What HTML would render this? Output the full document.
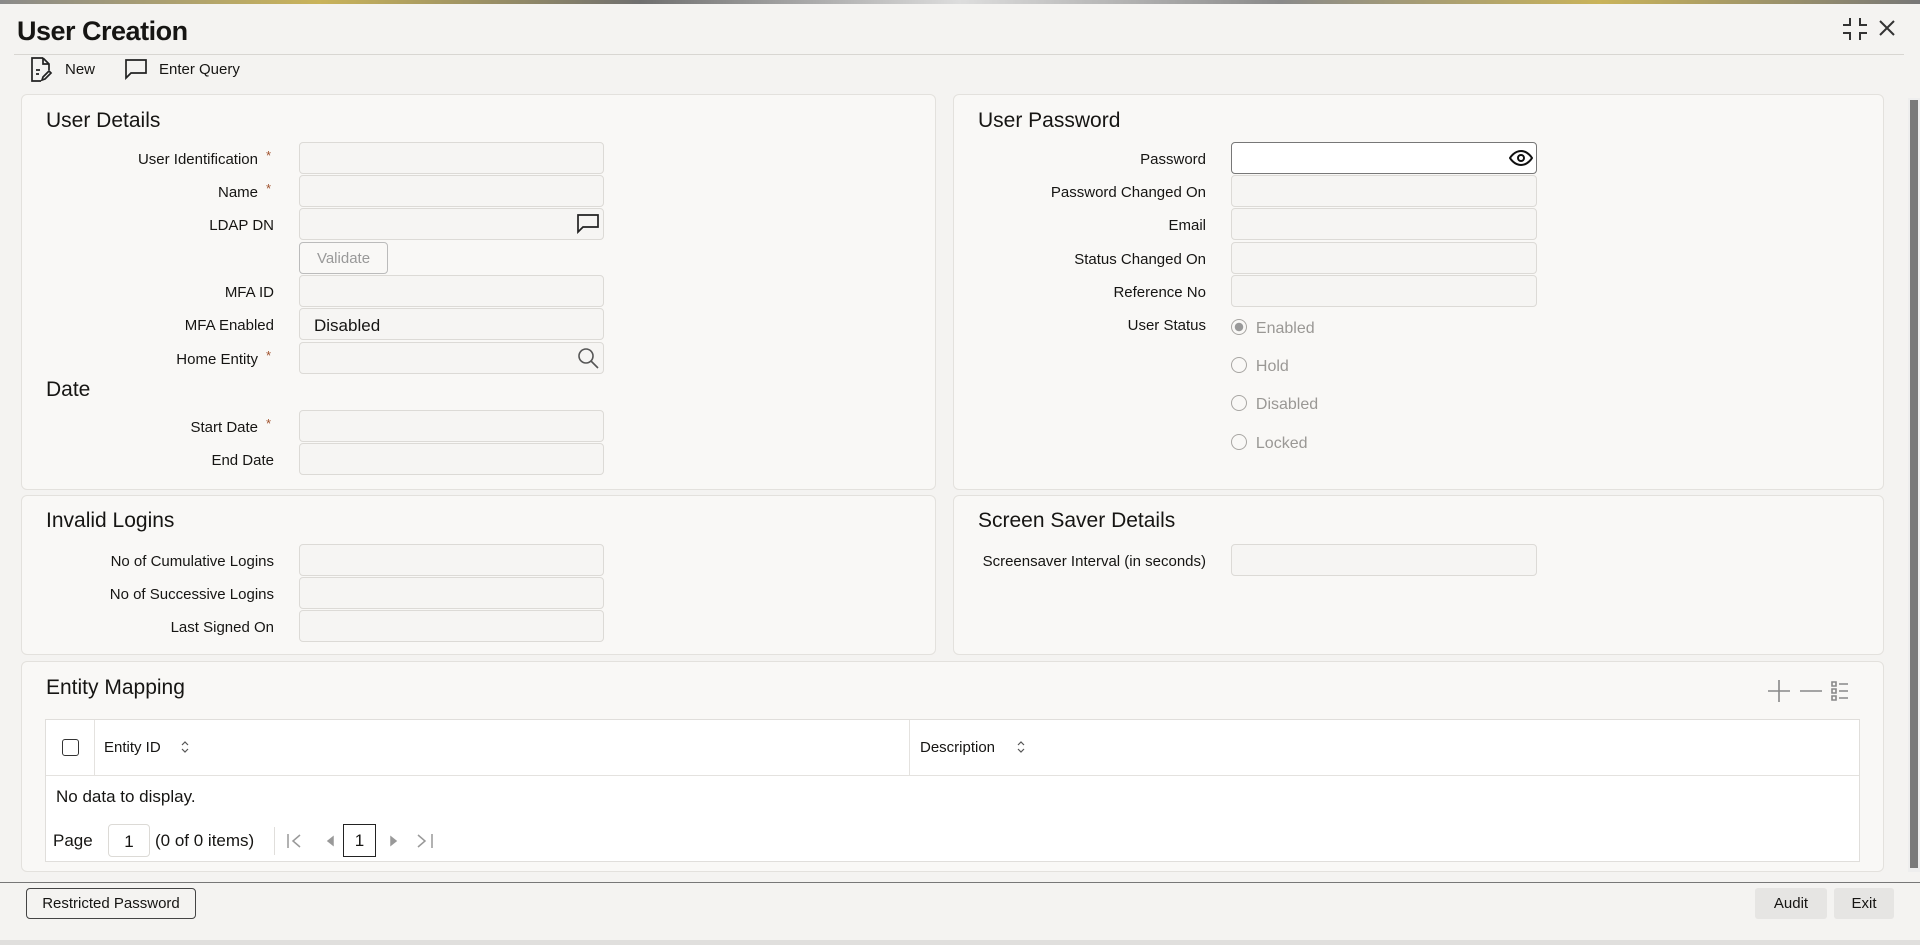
<!DOCTYPE html>
<html><head><meta charset="utf-8"><style>
*{box-sizing:border-box;margin:0;padding:0}
body{width:1920px;height:945px;overflow:hidden;background:#f4f3f1;font-family:"Liberation Sans",sans-serif;color:#161513;position:relative}
.a{position:absolute}
.top{left:0;top:0;width:1920px;height:4px;background:linear-gradient(90deg,#8a8a8a,#c9b35a,#6f6f6f,#ddd,#8a8a8a,#c9b35a,#777)}
.title{left:17px;top:16px;font-size:27px;font-weight:bold;letter-spacing:-0.5px}
.hl{left:14px;top:54px;width:1890px;height:1px;background:#d8d6d2}
.panel{background:#f9f8f6;border:1px solid #e3e1dd;border-radius:6px}
.h{font-size:21px;color:#161513;margin-top:2px}
.lbl{font-size:15px;text-align:right;width:240px;margin-top:2px}
.req{color:#a0522d;font-size:13px;margin-top:2px}
.in{height:32px;border:1px solid #dcdad6;border-radius:4px;background:#f6f5f3}
.rad{font-size:16px;color:#9a9895;margin-top:1px}
.rc{width:16px;height:16px;border:1.5px solid #a8a6a3;border-radius:50%;display:inline-block}
.btn{border:1px solid #bbb;border-radius:4px;font-size:15px;text-align:center}
</style></head><body>
<div class="a top"></div>
<div class="a title">User Creation</div>
<svg class="a" style="left:1842px;top:17px" width="26" height="24" viewBox="0 0 26 24" fill="none" stroke="#333" stroke-width="2"><path d="M8 1v7H1M18 1v7h7M8 23v-7H1M18 23v-7h7"/></svg>
<svg class="a" style="left:1878px;top:19px" width="18" height="18" viewBox="0 0 18 18" stroke="#333" stroke-width="2"><path d="M2 2l14 14M16 2L2 16"/></svg>
<div class="a hl"></div>
<svg class="a" style="left:29px;top:57px" width="24" height="26" viewBox="0 0 24 26" fill="none" stroke="#222" stroke-width="1.7"><path d="M14 1H3v23h9M14 1l6 6v6M14 1v6h6M7 13h4M7 17h3M13 23l1-3 6-6 2 2-6 6z"/></svg>
<div class="a" style="left:65px;top:61px;font-size:15px">New</div>
<svg class="a" style="left:124px;top:58px" width="24" height="22" viewBox="0 0 24 22" fill="none" stroke="#222" stroke-width="1.7"><path d="M2 2h20v13H7l-5 5z"/></svg>
<div class="a" style="left:159px;top:61px;font-size:15px">Enter Query</div>

<div class="a panel" style="left:21px;top:94px;width:915px;height:396px"></div>
<div class="a panel" style="left:953px;top:94px;width:931px;height:396px"></div>
<div class="a panel" style="left:21px;top:495px;width:915px;height:160px"></div>
<div class="a panel" style="left:953px;top:495px;width:931px;height:160px"></div>
<div class="a panel" style="left:21px;top:661px;width:1863px;height:211px"></div>

<div class="a h" style="left:46px;top:107px">User Details</div>
<div class="a lbl" style="left:18px;top:149px">User Identification</div><span class="a req" style="left:266px;top:146px">*</span><div class="a in" style="left:299px;top:142px;width:305px"></div>
<div class="a lbl" style="left:18px;top:182px">Name</div><span class="a req" style="left:266px;top:179px">*</span><div class="a in" style="left:299px;top:175px;width:305px"></div>
<div class="a lbl" style="left:34px;top:215px">LDAP DN</div><div class="a in" style="left:299px;top:208px;width:305px"></div>
<svg class="a" style="left:577px;top:214px" width="22" height="20" viewBox="0 0 22 20" fill="none" stroke="#222" stroke-width="1.7"><path d="M1 1h20v12H6l-5 5z"/></svg>
<div class="a btn" style="left:299px;top:242px;width:89px;height:32px;line-height:32px;color:#999">Validate</div>
<div class="a lbl" style="left:34px;top:282px">MFA ID</div><div class="a in" style="left:299px;top:275px;width:305px"></div>
<div class="a lbl" style="left:34px;top:315px">MFA Enabled</div><div class="a in" style="left:299px;top:308px;width:305px;font-size:17px;padding:7px 14px">Disabled</div>
<div class="a lbl" style="left:18px;top:349px">Home Entity</div><span class="a req" style="left:266px;top:346px">*</span><div class="a in" style="left:299px;top:342px;width:305px"></div>
<svg class="a" style="left:577px;top:347px" width="22" height="22" viewBox="0 0 22 22" fill="none" stroke="#555" stroke-width="1.6"><circle cx="9" cy="9" r="7"/><path d="M14 14l7 7"/></svg>
<div class="a h" style="left:46px;top:376px">Date</div>
<div class="a lbl" style="left:18px;top:417px">Start Date</div><span class="a req" style="left:266px;top:414px">*</span><div class="a in" style="left:299px;top:410px;width:305px"></div>
<div class="a lbl" style="left:34px;top:450px">End Date</div><div class="a in" style="left:299px;top:443px;width:305px"></div>

<div class="a h" style="left:978px;top:107px">User Password</div>
<div class="a lbl" style="left:966px;top:149px">Password</div><div class="a in" style="left:1231px;top:142px;width:306px;background:#fff;border-color:#777"></div>
<svg class="a" style="left:1509px;top:149px" width="24" height="18" viewBox="0 0 24 18" fill="none" stroke="#111" stroke-width="2"><path d="M1 9s4-7 11-7 11 7 11 7-4 7-11 7S1 9 1 9z"/><circle cx="12" cy="9" r="3"/></svg>
<div class="a lbl" style="left:966px;top:182px">Password Changed On</div><div class="a in" style="left:1231px;top:175px;width:306px"></div>
<div class="a lbl" style="left:966px;top:215px">Email</div><div class="a in" style="left:1231px;top:208px;width:306px"></div>
<div class="a lbl" style="left:966px;top:249px">Status Changed On</div><div class="a in" style="left:1231px;top:242px;width:306px"></div>
<div class="a lbl" style="left:966px;top:282px">Reference No</div><div class="a in" style="left:1231px;top:275px;width:306px"></div>
<div class="a lbl" style="left:966px;top:315px">User Status</div>
<div class="a rad" style="left:1231px;top:318px"><span class="rc" style="vertical-align:-2px;background:radial-gradient(#999 40%,transparent 45%)"></span>&nbsp; Enabled</div>
<div class="a rad" style="left:1231px;top:356px"><span class="rc" style="vertical-align:-2px"></span>&nbsp; Hold</div>
<div class="a rad" style="left:1231px;top:394px"><span class="rc" style="vertical-align:-2px"></span>&nbsp; Disabled</div>
<div class="a rad" style="left:1231px;top:433px"><span class="rc" style="vertical-align:-2px"></span>&nbsp; Locked</div>

<div class="a h" style="left:46px;top:507px">Invalid Logins</div>
<div class="a lbl" style="left:34px;top:551px">No of Cumulative Logins</div><div class="a in" style="left:299px;top:544px;width:305px"></div>
<div class="a lbl" style="left:34px;top:584px">No of Successive Logins</div><div class="a in" style="left:299px;top:577px;width:305px"></div>
<div class="a lbl" style="left:34px;top:617px">Last Signed On</div><div class="a in" style="left:299px;top:610px;width:305px"></div>

<div class="a h" style="left:978px;top:507px">Screen Saver Details</div>
<div class="a lbl" style="left:906px;top:551px;width:300px">Screensaver Interval (in seconds)</div><div class="a in" style="left:1231px;top:544px;width:306px"></div>

<div class="a h" style="left:46px;top:674px">Entity Mapping</div>
<svg class="a" style="left:1766px;top:678px" width="96" height="26" viewBox="0 0 96 26" fill="none" stroke="#888" stroke-width="1.6"><path d="M13 2v22M2 13h22M34 13h22M66 4h4v4h-4zM66 11h4v4h-4zM66 18h4v4h-4zM73 6h9M73 13h9M73 20h9"/></svg>
<div class="a" style="left:45px;top:719px;width:1815px;height:143px;background:#fff;border:1px solid #e0dedb"></div>
<div class="a" style="left:46px;top:775px;width:1813px;height:1px;background:#e4e2df"></div>
<div class="a" style="left:94px;top:720px;width:1px;height:55px;background:#e4e2df"></div>
<div class="a" style="left:909px;top:720px;width:1px;height:55px;background:#e4e2df"></div>
<div class="a" style="left:62px;top:739px;width:17px;height:17px;border:1.5px solid #333;border-radius:3px"></div>
<div class="a" style="left:104px;top:739px;font-size:15px">Entity ID</div>
<svg class="a" style="left:180px;top:740px" width="10" height="14" viewBox="0 0 10 14" fill="none" stroke="#555" stroke-width="1.2"><path d="M2 5l3-3 3 3M2 9l3 3 3-3"/></svg>
<div class="a" style="left:920px;top:739px;font-size:15px">Description</div>
<svg class="a" style="left:1016px;top:740px" width="10" height="14" viewBox="0 0 10 14" fill="none" stroke="#555" stroke-width="1.2"><path d="M2 5l3-3 3 3M2 9l3 3 3-3"/></svg>
<div class="a" style="left:56px;top:787px;font-size:17px">No data to display.</div>
<div class="a" style="left:53px;top:831px;font-size:17px">Page</div>
<div class="a" style="left:108px;top:824px;width:42px;height:33px;border:1px solid #dcdad6;border-radius:4px;font-size:17px;text-align:center;line-height:34px">1</div>
<div class="a" style="left:155px;top:831px;font-size:17px">(0 of 0 items)</div>
<div class="a" style="left:274px;top:827px;width:1px;height:28px;background:#e0dedb"></div>
<svg class="a" style="left:287px;top:832px" width="150" height="18" viewBox="0 0 150 18" fill="none" stroke="#999" stroke-width="1.5"><path d="M1 2v14M13 3l-7 6 7 6"/><path d="M46 5v8l-5-4z" fill="#999"/><path d="M104 5v8l5-4z" fill="#999"/><path d="M131 3l7 6-7 6M145 2v14"/></svg>
<div class="a" style="left:343px;top:824px;width:33px;height:33px;border:1.5px solid #222;font-size:17px;text-align:center;line-height:32px">1</div>

<div class="a" style="left:1908px;top:98px;width:12px;height:774px;background:#eee"></div>
<div class="a" style="left:1910px;top:100px;width:8px;height:768px;background:#7a7a7a"></div>
<div class="a" style="left:0;top:882px;width:1920px;height:1px;background:#777"></div>
<div class="a btn" style="left:26px;top:888px;width:170px;height:31px;line-height:30px;border-color:#444">Restricted Password</div>
<div class="a" style="left:1755px;top:888px;width:72px;height:31px;background:#e6e5e3;border-radius:3px;font-size:15px;text-align:center;line-height:32px">Audit</div>
<div class="a" style="left:1834px;top:888px;width:60px;height:31px;background:#e6e5e3;border-radius:3px;font-size:15px;text-align:center;line-height:32px">Exit</div>
<div class="a" style="left:0;top:940px;width:1920px;height:5px;background:#e0dfdd"></div>
</body></html>
